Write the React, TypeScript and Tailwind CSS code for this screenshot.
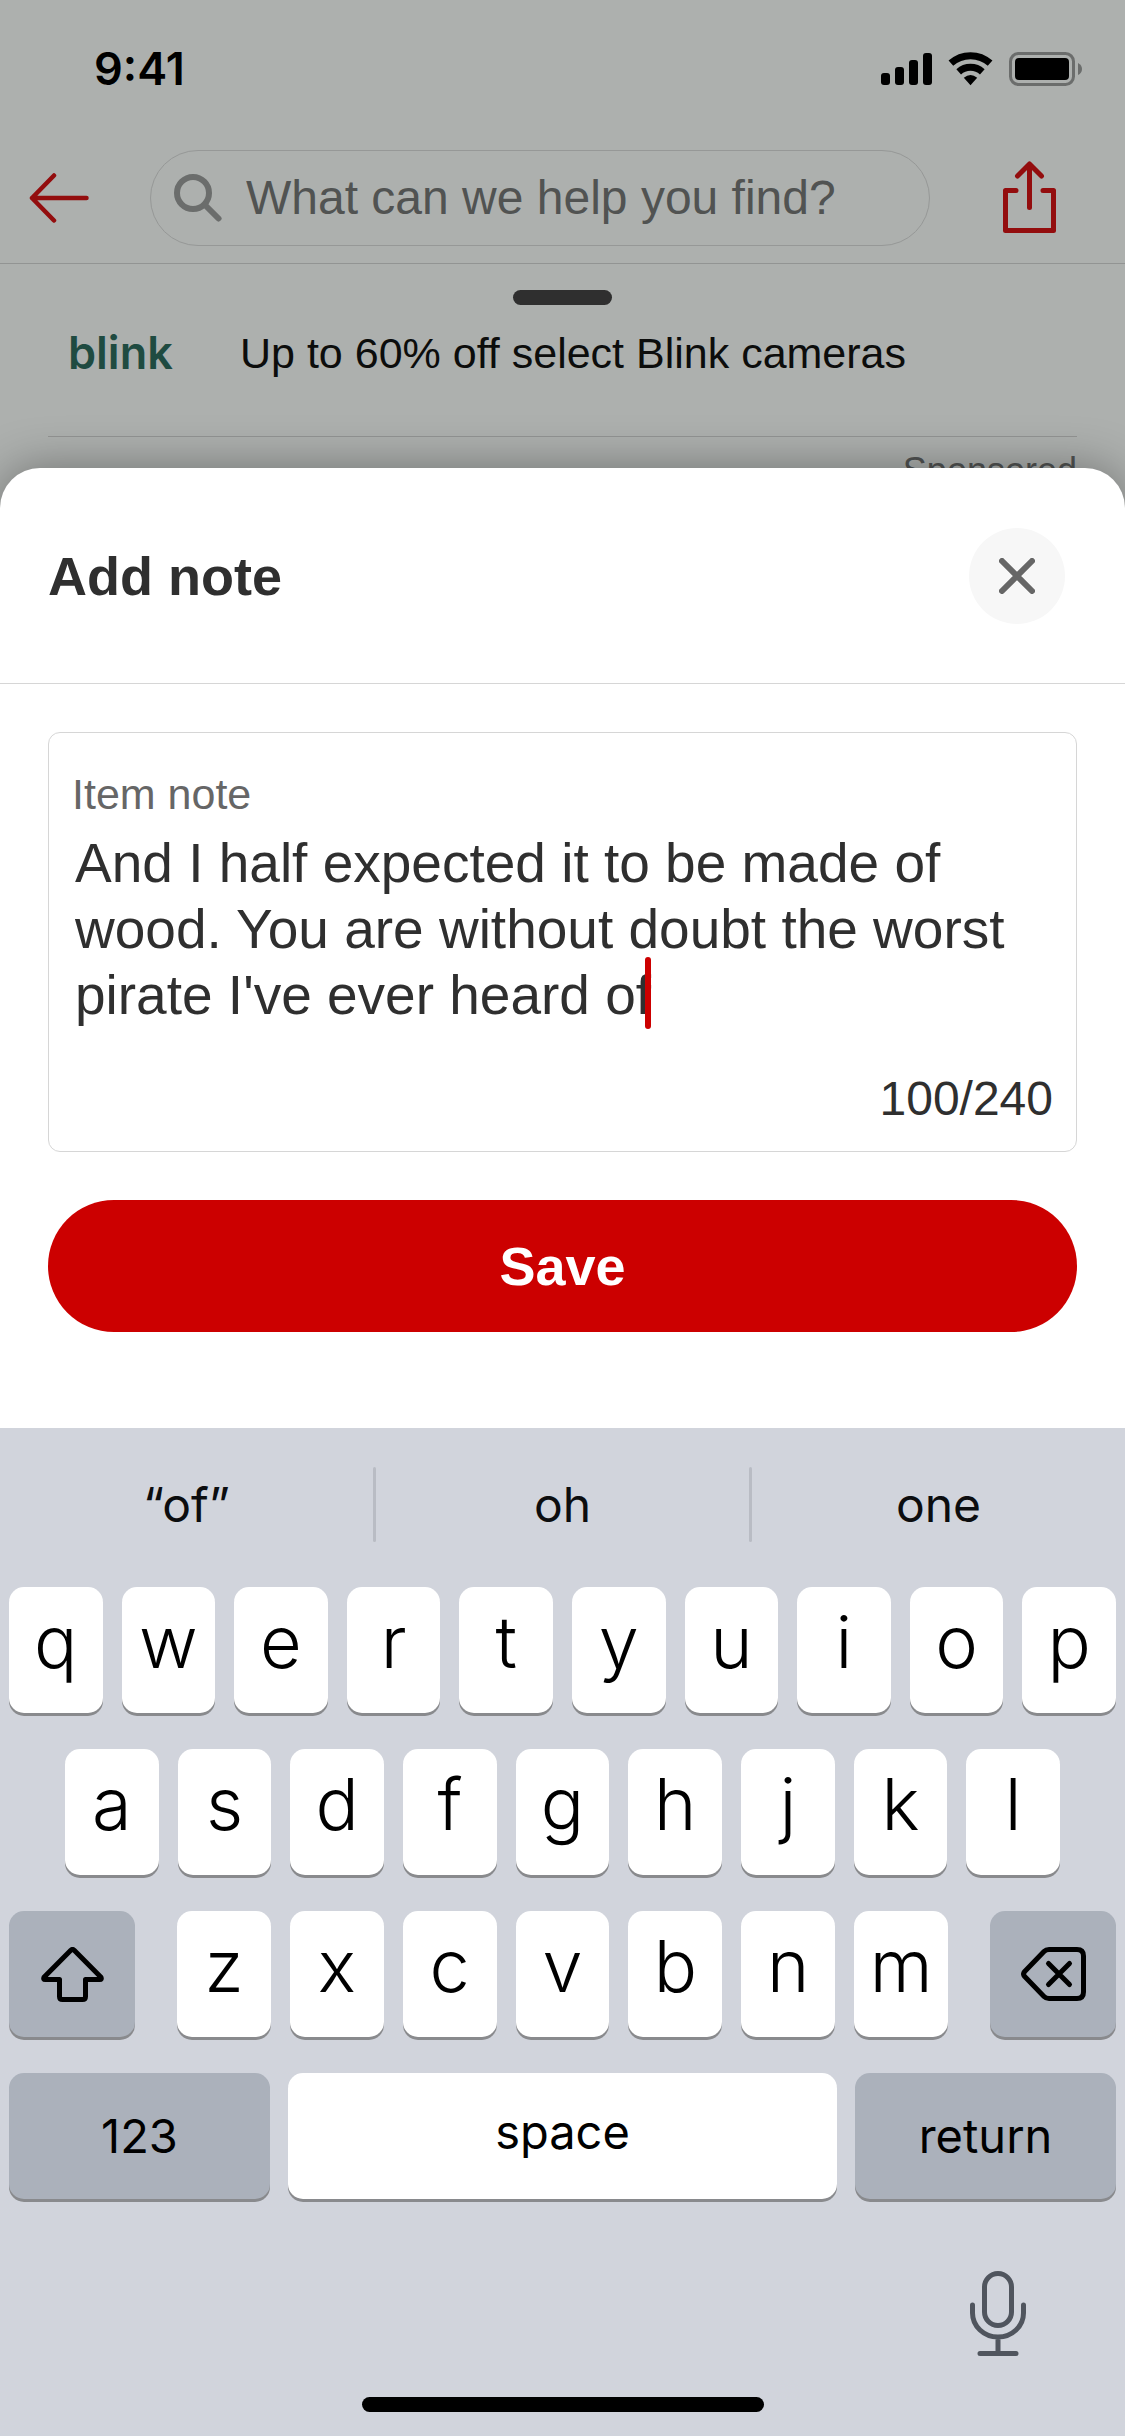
import { useState } from "react";

const TOP_ROW = ["q", "w", "e", "r", "t", "y", "u", "i", "o", "p"];
const HOME_ROW = ["a", "s", "d", "f", "g", "h", "j", "k", "l"];
const BOTTOM_ROW = ["z", "x", "c", "v", "b", "n", "m"];

const NOTE =
  "And I half expected it to be made of wood. You are without doubt the worst pirate I've ever heard of";

function SignalIcon() {
  return (
    <svg width="51" height="34" viewBox="0 0 51 34" aria-hidden="true">
      <rect x="0" y="21" width="9" height="12" rx="3" />
      <rect x="14" y="15" width="9" height="18" rx="3" />
      <rect x="28" y="8" width="9" height="25" rx="3" />
      <rect x="42" y="1" width="9" height="32" rx="3" />
    </svg>
  );
}

function WifiIcon() {
  return (
    <svg width="45" height="34" viewBox="0 0 45 34" aria-hidden="true">
      <g fill="none" stroke="#000" strokeWidth="7">
        <path d="M2.9 11.2a29.3 29.3 0 0 1 39.2 0" />
        <path d="M10.7 19.8a17.7 17.7 0 0 1 23.6 0" />
      </g>
      <path d="M15.8 25.8q6.7-5.6 13.4 0l-6.7 7.4z" />
    </svg>
  );
}

function BatteryIcon() {
  return (
    <svg width="73" height="34" viewBox="0 0 73 34" aria-hidden="true">
      <rect x="1.5" y="1.5" width="63" height="31" rx="8" fill="none" stroke="#6b6d6c" strokeWidth="3" />
      <rect x="6" y="6" width="54" height="22" rx="4" />
      <path d="M69 11v12q4-2 4-6t-4-6z" fill="#6b6d6c" />
    </svg>
  );
}

function StatusBar() {
  return (
    <div className="flex h-[138px] items-center justify-between pr-[43px] pl-[94px]">
      <span className="font-[Inter,sans-serif] text-[45px] leading-[54px] font-semibold text-black">9:41</span>
      <div className="flex items-center gap-4">
        <SignalIcon />
        <WifiIcon />
        <BatteryIcon />
      </div>
    </div>
  );
}

function SearchHeader() {
  return (
    <header className="flex items-center border-b border-[#929493] pt-3 pr-[69px] pb-[17px] pl-[29px]">
      <button type="button" aria-label="Back">
        <svg width="60" height="50" viewBox="0 0 60 50" fill="none" stroke="#930d0e" strokeWidth="4.5" strokeLinecap="round" strokeLinejoin="round">
          <path d="M25 2.5 3 25 25 47.5M3 25H57.5" />
        </svg>
      </button>
      <label className="mr-[73px] ml-[61px] flex h-24 min-w-0 flex-1 items-center gap-6 rounded-full border border-[#969897] px-[23px]">
        <svg className="shrink-0" width="48" height="48" viewBox="0 0 48 48" fill="none" stroke="#6b6d6c" strokeWidth="6" strokeLinecap="round" aria-hidden="true">
          <circle cx="19" cy="19" r="16" />
          <path d="M31 31 44.5 44.5" />
        </svg>
        <input
          type="search"
          aria-label="Search"
          placeholder="What can we help you find?"
          className="min-w-0 flex-1 bg-transparent text-[48px] leading-[60px] outline-none placeholder:text-[#515352] placeholder:opacity-100"
        />
      </label>
      <button type="button" aria-label="Share">
        <svg width="53" height="74" viewBox="0 0 53 74" fill="none" stroke="#930d0e" strokeWidth="5" strokeLinecap="round" strokeLinejoin="round">
          <path d="M13 29.5H2.5v40h48v-40H40" />
          <path d="M26.5 3v43.5M14.5 15 26.5 3l12 12" />
        </svg>
      </button>
    </header>
  );
}

function PromoBanner() {
  return (
    <section className="px-12">
      <div className="mx-auto mt-[26px] h-[15px] w-[99px] rounded-full bg-[#2f2f2f]" />
      <div className="mt-[18px] flex items-center border-b border-[#929493] pb-[53px] pl-5">
        <span className="w-[172px] font-[Inter,sans-serif] text-[45px] leading-[60px] font-semibold text-[#1f4b41]">
          blink
        </span>
        <p className="text-[43px] leading-[60px] text-[#0c0d0c]">Up to 60% off select Blink cameras</p>
      </div>
      <p className="mt-[13px] text-right text-[36px] leading-[42px] text-[#515352]">Sponsored</p>
    </section>
  );
}

function NoteSheet() {
  const [note, setNote] = useState(NOTE);

  return (
    <section
      role="dialog"
      aria-labelledby="sheet-title"
      className="relative -mt-6 rounded-t-[40px] bg-white shadow-[0_0_48px_rgba(0,0,0,0.36)]"
    >
      <div className="flex items-center justify-between border-b border-[#d6d6d6] pt-[60px] pr-[60px] pb-[59px] pl-12">
        <h2 id="sheet-title" className="text-[54px] leading-[66px] font-bold text-[#2f2f2f]">
          Add note
        </h2>
        <button type="button" aria-label="Close" className="flex size-24 items-center justify-center rounded-full bg-[#f7f7f7]">
          <svg width="36" height="36" viewBox="0 0 36 36" fill="none" stroke="#666" strokeWidth="6" strokeLinecap="round">
            <path d="m3 3 30 30M33 3 3 33" />
          </svg>
        </button>
      </div>

      <div className="px-12 pt-12 pb-24">
        <div className="flex flex-col rounded-xl border border-[#d6d6d6] px-[23px] pt-[35px] pb-[22px]">
          <label htmlFor="item-note" className="text-[43px] leading-[52px] text-[#666]">
            Item note
          </label>
          <div className="relative mt-[10px] pl-[3px]">
            <textarea
              id="item-note"
              rows={3}
              maxLength={240}
              value={note}
              onChange={(e) => setNote(e.target.value)}
              className="block w-full resize-none overflow-hidden bg-transparent text-[55px] leading-[66px] text-[#2f2f2f] caret-[#cc0000] outline-none"
            />
            {/* text cursor */}
            <span className="absolute -bottom-px left-[573px] h-[72px] w-[6px] rounded-full bg-[#cc0000]" />
          </div>
          <p className="mt-[41px] text-right text-[48px] leading-[60px] text-[#2f2f2f]">{note.length}/240</p>
        </div>
        <button type="button" className="mt-12 h-[132px] w-full rounded-full bg-[#cc0000] text-[54px] leading-[66px] font-bold text-white">
          Save
        </button>
      </div>
    </section>
  );
}

function LetterKey({ letter }: { letter: string }) {
  return (
    <button
      type="button"
      className="flex h-[126px] min-w-0 flex-1 items-center justify-center rounded-[15px] bg-white pb-4 text-[72px] leading-[84px] font-[350] shadow-[0_3px_0_#898a8d]"
    >
      {letter}
    </button>
  );
}

function ShiftKey() {
  return (
    <button
      type="button"
      aria-label="Shift"
      className="flex h-[126px] w-[126px] items-center justify-center rounded-[15px] bg-[#abb1bb] shadow-[0_3px_0_#898a8d]"
    >
      <svg width="63" height="55" viewBox="0 0 63 55" fill="none" stroke="#000" strokeWidth="5" strokeLinejoin="round">
        <path d="M29.8 3.3q1.7-1.6 3.4 0L60 30.3q1 2.2-1.2 2.2H44.5V49.5q0 3-3 3H21.5q-3 0-3-3V32.5H4.2Q2 32.5 3 30.3z" />
      </svg>
    </button>
  );
}

function DeleteKey() {
  return (
    <button
      type="button"
      aria-label="Delete"
      className="flex h-[126px] w-[126px] items-center justify-center rounded-[15px] bg-[#abb1bb] shadow-[0_3px_0_#898a8d]"
    >
      <svg width="65" height="54" viewBox="0 0 65 54" fill="none" stroke="#000" strokeWidth="5" strokeLinecap="round" strokeLinejoin="round">
        <path d="M28 2.5H56q6.5 0 6.5 6.5V45q0 6.5-6.5 6.5H28q-3 0-5-2L3.7 29.5q-2.2-2.5 0-5L23 4.5q2-2 5-2z" />
        <path d="m27.5 16.5 21 21M48.5 16.5l-21 21" />
      </svg>
    </button>
  );
}

function Keyboard() {
  return (
    <section className="relative bg-[#d1d4dc] pb-6 font-[Inter,sans-serif] text-black">
      <div className="flex pt-[39px] pb-[45px] text-[48px] leading-[75px] text-[#0c0d0f]">
        <button type="button" className="flex-1">“of”</button>
        <div className="w-[3px] rounded-full bg-[#b9bcc4]" />
        <button type="button" className="flex-1">oh</button>
        <div className="w-[3px] rounded-full bg-[#b9bcc4]" />
        <button type="button" className="flex-1">one</button>
      </div>

      <div className="flex flex-col gap-9 px-[9px]">
        <div className="flex gap-[19px]">
          {TOP_ROW.map((letter) => (
            <LetterKey key={letter} letter={letter} />
          ))}
        </div>
        <div className="flex gap-[19px] px-14">
          {HOME_ROW.map((letter) => (
            <LetterKey key={letter} letter={letter} />
          ))}
        </div>
        <div className="flex gap-[42px]">
          <ShiftKey />
          <div className="flex min-w-0 flex-1 gap-[19px]">
            {BOTTOM_ROW.map((letter) => (
              <LetterKey key={letter} letter={letter} />
            ))}
          </div>
          <DeleteKey />
        </div>
        <div className="flex gap-[18px] text-[47px] leading-[60px]">
          <button type="button" className="h-[126px] w-[261px] rounded-[15px] bg-[#abb1bb] shadow-[0_3px_0_#898a8d]">
            123
          </button>
          <button type="button" className="h-[126px] flex-1 rounded-[15px] bg-white pb-2 shadow-[0_3px_0_#898a8d]">
            space
          </button>
          <button type="button" className="h-[126px] w-[261px] rounded-[15px] bg-[#abb1bb] shadow-[0_3px_0_#898a8d]">
            return
          </button>
        </div>
      </div>

      <div className="mt-[72px] flex justify-end pr-[99px]">
        <button type="button" aria-label="Dictate">
          <svg width="56" height="85" viewBox="0 0 56 85" fill="none" stroke="#50555e" strokeWidth="5" strokeLinecap="round">
            <rect x="14.5" y="2.5" width="27" height="52" rx="13.5" />
            <path d="M2.5 34v8a25.5 24 0 0 0 51 0v-8M28 66v16M10 82.5h36" />
          </svg>
        </button>
      </div>
      <div className="mx-auto mt-[41px] h-[15px] w-[402px] rounded-full bg-black" />
    </section>
  );
}

export default function App() {
  return (
    <main className="min-h-screen bg-[#adb0ae] font-['Liberation_Sans',Arial,sans-serif]">
      <StatusBar />
      <SearchHeader />
      <PromoBanner />
      <NoteSheet />
      <Keyboard />
    </main>
  );
}
